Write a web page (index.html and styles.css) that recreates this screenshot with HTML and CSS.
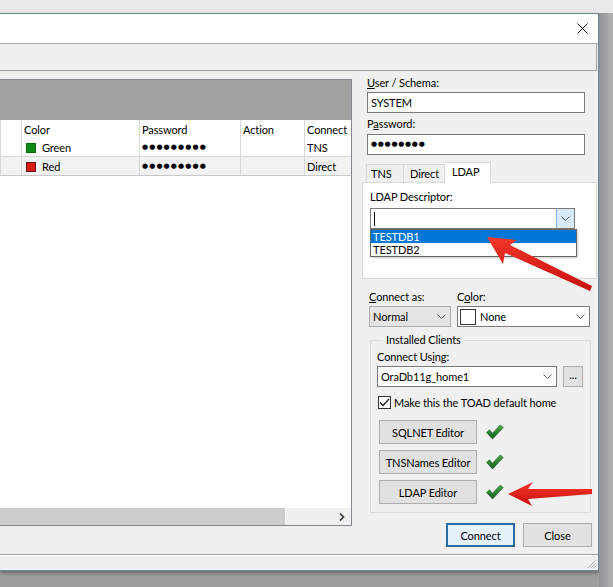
FILE: index.html
```html
<!DOCTYPE html>
<html lang="en">
<head>
  <meta charset="UTF-8" />
  <title>New Connection</title>
  <link rel="stylesheet" href="styles.css">
</head>
<body>
  <div class="screen">
    <div class="backwin"></div>
    <div class="desk">
      <div class="dialog">
        <div class="titlebar">
          <svg class="close-x" width="11" height="11" viewBox="0 0 11 11"><path d="M0.5 0.5 L10.5 10.5 M10.5 0.5 L0.5 10.5" stroke="#111" stroke-width="1"/></svg>
        </div>
        <div class="toolbar"></div>

        <div class="main">
          <!-- connection list -->
          <div class="grid">
            <div class="grid-band"></div>
            <table class="conn-table">
              <colgroup>
                <col style="width:21px"><col style="width:118px"><col style="width:101px"><col style="width:64px"><col style="width:80px">
              </colgroup>
              <tr class="head">
                <th></th><th>Color</th><th>Password</th><th>Action</th><th>Connect</th>
              </tr>
              <tr>
                <td></td>
                <td><span class="swatch green"></span>Green</td>
                <td class="dots">●●●●●●●●●</td>
                <td></td>
                <td>TNS</td>
              </tr>
              <tr class="alt">
                <td></td>
                <td><span class="swatch red"></span>Red</td>
                <td class="dots">●●●●●●●●●</td>
                <td></td>
                <td>Direct</td>
              </tr>
            </table>
            <div class="grid-fill"></div>
            <div class="hscroll">
              <div class="thumb"></div>
              <div class="track"></div>
              <svg class="sarrow" width="6" height="8" viewBox="0 0 6 8"><path d="M1 0.5 L4.5 4 L1 7.5" fill="none" stroke="#333" stroke-width="1.6"/></svg>
            </div>
          </div>

          <!-- login side -->
          <div class="side">
            <div class="field">
              <div class="lbl"><u>U</u>ser / Schema:</div>
              <div class="input">SYSTEM</div>
              <div class="lbl gap"><span>P<u>a</u>ssword:</span></div>
              <div class="input pw">●●●●●●●●</div>
            </div>

            <div class="tabs">
              <div class="tab t1">TNS</div>
              <div class="tab t2">Direct</div>
              <div class="tab t3 active">LDAP</div>
            </div>
            <div class="tab-panel">
              <div class="lbl">LDAP Descriptor:</div>
              <div class="combo ldap">
                <span class="val"><span class="caret"></span></span>
                <span class="drop hot">
                  <svg width="9" height="5" viewBox="0 0 9 5"><path d="M0.5 0.5 L4.5 4.5 L8.5 0.5" fill="none" stroke="#555" stroke-width="1"/></svg>
                </span>
                <div class="droplist">
                  <div class="opt sel">TESTDB1</div>
                  <div class="opt">TESTDB2</div>
                </div>
              </div>
            </div>

            <div class="pair">
              <div class="col-as">
                <div class="lbl"><u>C</u>onnect as:</div>
                <div class="combo plain">
                  <span class="val">Normal</span>
                  <span class="drop">
                    <svg width="9" height="5" viewBox="0 0 9 5"><path d="M0.5 0.5 L4.5 4.5 L8.5 0.5" fill="none" stroke="#555" stroke-width="1"/></svg>
                  </span>
                </div>
              </div>
              <div class="col-color">
                <div class="lbl">C<u>o</u>lor:</div>
                <div class="combo">
                  <span class="val"><span class="swatch none"></span>None</span>
                  <span class="drop">
                    <svg width="9" height="5" viewBox="0 0 9 5"><path d="M0.5 0.5 L4.5 4.5 L8.5 0.5" fill="none" stroke="#555" stroke-width="1"/></svg>
                  </span>
                </div>
              </div>
            </div>

            <fieldset class="clients">
              <legend>Installed Clients</legend>
              <div class="lbl">Connect Us<u>i</u>ng:</div>
              <div class="using">
                <div class="combo home">
                  <span class="val">OraDb11g_home1</span>
                  <span class="drop">
                    <svg width="9" height="5" viewBox="0 0 9 5"><path d="M0.5 0.5 L4.5 4.5 L8.5 0.5" fill="none" stroke="#555" stroke-width="1"/></svg>
                  </span>
                </div>
                <div class="btn more">...</div>
              </div>
              <label class="check">
                <span class="box">
                  <svg width="11" height="9" viewBox="0 0 11 9"><path d="M1 4.5 L4 7.5 L10 1" fill="none" stroke="#222" stroke-width="1.3"/></svg>
                </span>
                Make this the TOAD default home
              </label>
              <div class="editor-row first">
                <div class="btn editor">SQLNET Editor</div>
                <svg class="ok" width="18" height="16" viewBox="0 0 18 16"><defs><linearGradient id="g1" x1="0" y1="0" x2="0" y2="1"><stop offset="0" stop-color="#4aaf4a"/><stop offset="1" stop-color="#145a25"/></linearGradient></defs><path d="M0.5 8.5 L3.5 5.8 L6.5 9.3 L14.2 1 L17.3 3.6 L6.6 15 Z" fill="url(#g1)" stroke="#1c5a25" stroke-width="0.6"/></svg>
              </div>
              <div class="editor-row">
                <div class="btn editor">TNSNames Editor</div>
                <svg class="ok" width="18" height="16" viewBox="0 0 18 16"><path d="M0.5 8.5 L3.5 5.8 L6.5 9.3 L14.2 1 L17.3 3.6 L6.6 15 Z" fill="url(#g1)" stroke="#1c5a25" stroke-width="0.6"/></svg>
              </div>
              <div class="editor-row">
                <div class="btn editor">LDAP Editor</div>
                <svg class="ok" width="18" height="16" viewBox="0 0 18 16"><path d="M0.5 8.5 L3.5 5.8 L6.5 9.3 L14.2 1 L17.3 3.6 L6.6 15 Z" fill="url(#g1)" stroke="#1c5a25" stroke-width="0.6"/></svg>
              </div>
            </fieldset>

            <div class="actions">
              <div class="btn default">Connect</div>
              <div class="btn">Close</div>
            </div>
          </div>
        </div>

        <div class="statusbar">
          <svg class="grip" width="11" height="11" viewBox="0 0 11 11"><path d="M10 2 L2 10 M10 5 L5 10 M10 8 L8 10" stroke="#b4b4b4" stroke-width="1"/></svg>
        </div>
      </div>
      <div class="shade"></div>
    </div>
  </div>

  <!-- red callout arrows drawn over the dialog -->
  <svg class="callouts" width="613" height="587" viewBox="0 0 613 587">
    <defs>
      <linearGradient id="red" x1="0" y1="0" x2="0" y2="1">
        <stop offset="0" stop-color="#f2362a"/>
        <stop offset="1" stop-color="#c8100c"/>
      </linearGradient>
    </defs>
    <path d="M487 237 L517 240 L510 245 L592 286 L590 291 L505 253 L503 264 Z" fill="url(#red)"/>
    <path d="M508 494 L533 482 L528 489 L592 489 L592 494 L528 499 L532 506 Z" fill="url(#red)"/>
  </svg>
</body>
</html>
```

FILE: styles.css
```css
body {
  margin: 0;
  font-family: 'Lato', 'Noto Sans', sans-serif;
  font-size: 11px;
  letter-spacing: -0.1px;
  color: #000;
  background: #a3a3a3;
}

.screen {
  width: 613px;
  height: 587px;
  overflow: hidden;
  display: flex;
  flex-direction: column;
  background: #9e9e9e;
}

.backwin {
  height: 13px;
  flex: none;
  background: #e8e8e8;
}

.desk {
  display: flex;
  flex: 1;
}

.shade {
  flex: 1;
  background: linear-gradient(90deg, #8f9396, #b1b1b1);
}

.dialog {
  width: 598px;
  height: 556px;
  flex: none;
  background: #f0f0f0;
  border: 1px solid #6f8795;
  border-left: none;
  box-shadow: 0 2px 4px rgba(0,0,0,0.35);
  display: flex;
  flex-direction: column;
}

.titlebar {
  height: 29px;
  background: #fff;
  border-bottom: 1px solid #acacac;
  display: flex;
  justify-content: flex-end;
  align-items: center;
  padding-right: 10px;
}

.toolbar {
  height: 26px;
  margin-right: 1px;
  border-bottom: 1px solid #a0a0a0;
  border-right: 1px solid #a0a0a0;
  background: #f0f0f0;
}

.main {
  height: 475px;
  padding-top: 8px;
  border-bottom: 1px solid #a0a0a0;
  display: flex;
  align-items: flex-start;
}

.statusbar {
  flex: 1;
  border-top: 1px solid #fff;
  display: flex;
  justify-content: flex-end;
  align-items: flex-end;
  padding: 0 1px 1px 0;
}

/* ---- grid ---- */

.grid {
  width: 351px;
  height: 445px;
  border: 1px solid #828790;
  border-left: none;
  background: #fff;
  display: flex;
  flex-direction: column;
  overflow: hidden;
}

.grid-band {
  height: 40px;
  flex: none;
  background: #a2a2a2;
}

.conn-table {
  table-layout: fixed;
  border-collapse: collapse;
  width: 384px;
  flex: none;
}

.conn-table th,
.conn-table td {
  height: 18px;
  padding: 0 0 0 2px;
  text-align: left;
  font-weight: normal;
  white-space: nowrap;
  overflow: hidden;
  border-left: 1px solid #d8d8d8;
  vertical-align: middle;
}

.conn-table td {
  border-bottom: 1px solid #d8d8d8;
}

.conn-table tr.alt td {
  background: #f2f2f2;
  border-bottom-color: #c8c8c8;
}

.swatch {
  display: inline-block;
  width: 10px;
  height: 10px;
  margin: 0 6px 0 2px;
  vertical-align: -1px;
  box-sizing: border-box;
}

.swatch.green { background: #0f8a16; border: 1px solid #0a6a10; }
.swatch.red { background: #dd1d14; border: 1px solid #6a1410; }
.swatch.none {
  width: 16px;
  height: 16px;
  background: #fff;
  border: 1px solid #333;
  margin: 0 4px 0 0;
  vertical-align: -4px;
}

.conn-table td.dots {
  font-family: 'DejaVu Sans', sans-serif;
  font-size: 7px;
  letter-spacing: 1.1px;
}

.grid-fill {
  flex: 1;
}

.hscroll {
  height: 17px;
  flex: none;
  display: flex;
  align-items: center;
  background: #f0f0f0;
}

.hscroll .thumb {
  width: 285px;
  height: 17px;
  background: #cdcdcd;
}

.hscroll .track {
  flex: 1;
}

.sarrow {
  margin-right: 6px;
}

/* ---- side panel ---- */

.side {
  width: 236px;
  margin-left: 10px;
  margin-top: -3px;
}

.lbl {
  height: 14px;
  line-height: 14px;
  white-space: nowrap;
}

.lbl.gap {
  margin-top: 4px;
}

.field {
  margin-left: 5px;
  width: 218px;
}

.input {
  height: 21px;
  box-sizing: border-box;
  margin-top: 2px;
  border: 1px solid #7a7a7a;
  background: #fff;
  line-height: 19px;
  padding-left: 3px;
}

.input.pw {
  margin-top: 3px;
  font-family: 'DejaVu Sans', sans-serif;
  font-size: 7px;
  letter-spacing: 0.7px;
}

.tabs {
  display: flex;
  align-items: flex-end;
  margin: 6px 0 0 4px;
  height: 21px;
  position: relative;
  z-index: 1;
}

.tab {
  height: 18px;
  line-height: 18px;
  box-sizing: border-box;
  border: 1px solid #d9d9d9;
  border-bottom: none;
  padding-left: 4px;
  background: #f0f0f0;
}

.tab.t1 { width: 38px; }
.tab.t2 { width: 41px; border-left: none; padding-left: 6px; }
.tab.t3 { width: 46px; border-left: none; padding-left: 7px; }

.tab.active {
  height: 21px;
  line-height: 17px;
  background: #fff;
  margin-bottom: -1px;
}

.tab-panel {
  height: 97px;
  box-sizing: border-box;
  border: 1px solid #d9d9d9;
  background: #fff;
  margin-right: 1px;
  padding: 7px 0 0 7px;
}

.tab-panel .lbl {
  margin-bottom: 4px;
}

.combo {
  height: 21px;
  box-sizing: border-box;
  border: 1px solid #7a7a7a;
  background: #fff;
  display: flex;
  align-items: center;
  position: relative;
}

.combo .val {
  flex: 1;
  padding-left: 3px;
  white-space: nowrap;
  display: flex;
  align-items: center;
}

.combo .drop {
  width: 17px;
  height: 19px;
  display: flex;
  align-items: center;
  justify-content: center;
}

.combo .drop.hot {
  background: #d8eaf9;
  border-left: 1px solid #7eb4ea;
}

.combo.plain {
  background: #e5e5e5;
  border-color: #acacac;
}

.combo.ldap {
  width: 205px;
}

.caret {
  width: 1px;
  height: 14px;
  background: #000;
}

.droplist {
  position: absolute;
  left: -1px;
  top: 20px;
  width: 205px;
  border: 1px solid #646464;
  background: #fff;
  z-index: 2;
  box-shadow: 1px 1px 2px rgba(0,0,0,0.2);
}

.opt {
  height: 13px;
  line-height: 13px;
  padding-left: 2px;
}

.opt.sel {
  background: #0078d7;
  color: #fff;
}

.pair {
  display: flex;
  margin: 11px 0 0 7px;
}

.col-as {
  width: 82px;
}

.col-as .combo,
.col-color .combo {
  margin-top: 2px;
}

.col-color {
  width: 133px;
  margin-left: 6px;
}

.col-color .val {
  padding-left: 2px;
}

.clients {
  margin: 6px 0 0 8px;
  width: 221px;
  box-sizing: border-box;
  border: 1px solid #dcdcdc;
  padding: 3px 0 8px 6px;
}

.clients legend {
  padding: 0 3px;
  margin-left: 6px;
  line-height: 14px;
}

.using {
  display: flex;
  margin-top: 2px;
}

.combo.home {
  width: 180px;
}

.btn {
  height: 23px;
  box-sizing: border-box;
  border: 1px solid #adadad;
  background: #e1e1e1;
  display: flex;
  align-items: center;
  justify-content: center;
  white-space: nowrap;
}

.btn.more {
  width: 20px;
  margin-left: 6px;
  height: 21px;
  padding-bottom: 4px;
}

.check {
  display: flex;
  align-items: center;
  height: 14px;
  margin-top: 8px;
  padding-left: 1px;
}

.check .box {
  width: 13px;
  height: 13px;
  box-sizing: border-box;
  border: 1px solid #333;
  background: #fff;
  margin-right: 3px;
  display: flex;
  align-items: center;
  justify-content: center;
}

.editor-row {
  display: flex;
  align-items: center;
  margin-top: 6px;
}

.editor-row.first {
  margin-top: 11px;
}

.btn.editor {
  width: 98px;
  height: 24px;
  margin-left: 2px;
}

.ok {
  margin-left: 9px;
}

.actions {
  display: flex;
  justify-content: flex-end;
  gap: 8px;
  margin: 10px 6px 0 0;
}

.actions .btn {
  width: 69px;
  height: 24px;
}

.btn.default {
  border: 2px solid #2b6ba1;
  background: #e5f1fb;
}

.grip {
  display: block;
}

.callouts {
  position: absolute;
  left: 0;
  top: 0;
  z-index: 10;
  pointer-events: none;
}
```
